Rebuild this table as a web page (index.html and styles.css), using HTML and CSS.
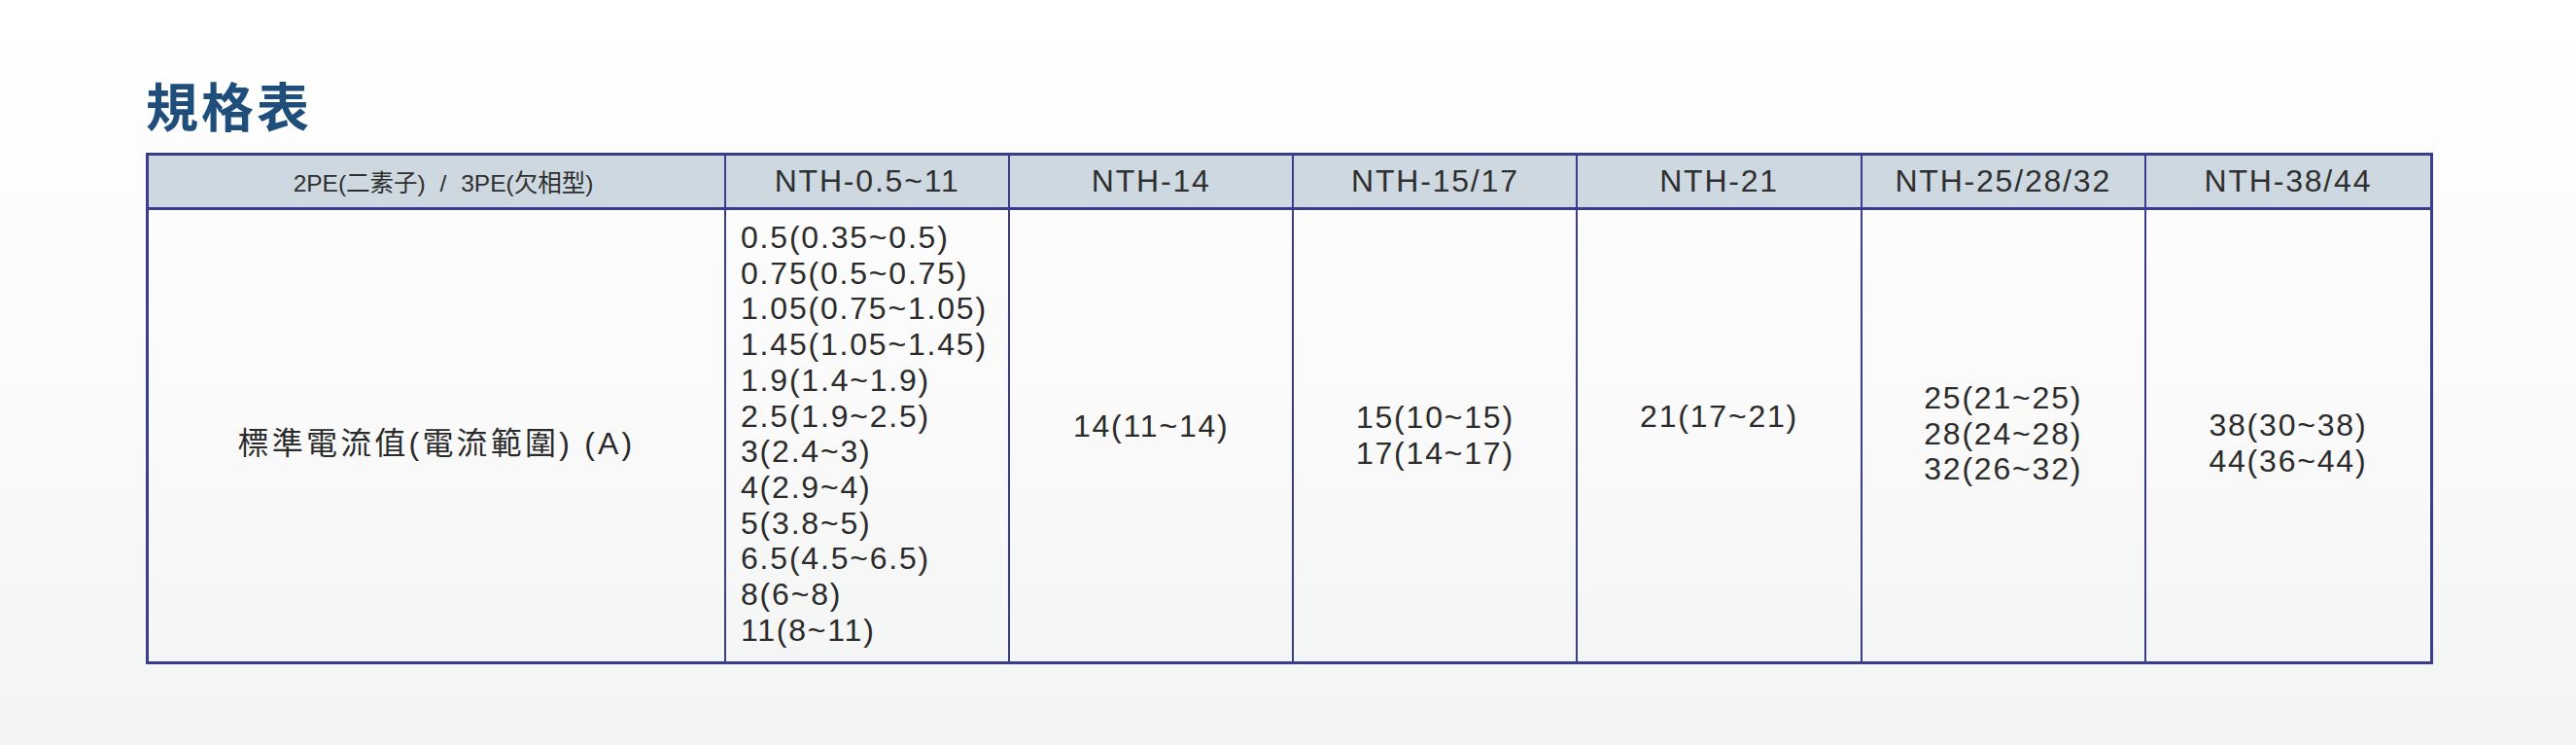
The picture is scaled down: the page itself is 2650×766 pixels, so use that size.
FILE: index.html
```html
<!DOCTYPE html>
<html lang="zh-Hant">
<head>
<meta charset="utf-8">
<title>規格表</title>
<link rel="stylesheet" href="styles.css">
</head>
<body>
<main class="page">
  <h1 class="title">規格表</h1>
  <table class="spec">
    <colgroup>
      <col class="col-label">
      <col class="col-model">
      <col class="col-model">
      <col class="col-model">
      <col class="col-model">
      <col class="col-model">
      <col class="col-model">
    </colgroup>
    <thead>
      <tr>
        <th class="head-label">2PE(二素子) / 3PE(欠相型)</th>
        <th>NTH-0.5~11</th>
        <th>NTH-14</th>
        <th>NTH-15/17</th>
        <th>NTH-21</th>
        <th>NTH-25/28/32</th>
        <th>NTH-38/44</th>
      </tr>
    </thead>
    <tbody>
      <tr>
        <td class="row-label shift-down">標準電流值(電流範圍) (A)</td>
        <td class="list">0.5(0.35~0.5)<br>0.75(0.5~0.75)<br>1.05(0.75~1.05)<br>1.45(1.05~1.45)<br>1.9(1.4~1.9)<br>2.5(1.9~2.5)<br>3(2.4~3)<br>4(2.9~4)<br>5(3.8~5)<br>6.5(4.5~6.5)<br>8(6~8)<br>11(8~11)</td>
        <td class="shift-up-s">14(11~14)</td>
        <td>15(10~15)<br>17(14~17)</td>
        <td class="shift-up-l">21(17~21)</td>
        <td class="shift-up-xs">25(21~25)<br>28(24~28)<br>32(26~32)</td>
        <td class="shift-down last">38(30~38)<br>44(36~44)</td>
      </tr>
    </tbody>
  </table>
</main>
</body>
</html>
```

FILE: styles.css
```css
html, body {
  margin: 0;
  padding: 0;
}

body {
  width: 2650px;
  height: 766px;
  background: linear-gradient(to bottom, #ffffff 0%, #fbfbfb 45%, #f3f4f4 100%);
  font-family: "Liberation Sans", Arial, "Noto Sans CJK TC", sans-serif;
  color: #2b2b2b;
  overflow: hidden;
}

.page {
  padding: 81px 0 0 150px;
}

.title {
  margin: 0 0 22px 0;
  font-family: "Noto Sans CJK TC", "Noto Sans CJK SC", sans-serif;
  font-weight: 700;
  font-size: 54px;
  line-height: 54px;
  letter-spacing: 3px;
  color: #1f4e7b;
}

.spec {
  width: 2353px;
  table-layout: fixed;
  border-collapse: separate;
  border-spacing: 0;
  border: 3px solid #3a3d8d;
}

.col-label {
  width: 594px;
}

.spec th,
.spec td {
  box-sizing: border-box;
  padding: 0;
  border-right: 2px solid #3a3d8d;
  text-align: center;
  font-weight: 400;
}

.spec th:last-child,
.spec td:last-child {
  border-right: none;
}

.spec th {
  height: 56px;
  background: #cdd8e0;
  border-bottom: 3px solid #3a3d8d;
  font-size: 32px;
  letter-spacing: 1.8px;
  color: #2f2f2f;
  vertical-align: middle;
}

.spec th.head-label {
  font-size: 24.5px;
  letter-spacing: 0;
  word-spacing: 8px;
  padding-left: 14px;
}

.spec td {
  height: 464px;
  font-size: 32px;
  line-height: 36.7px;
  letter-spacing: 1.8px;
  vertical-align: middle;
  color: #2b2b2b;
}

.spec td.row-label {
  letter-spacing: 3.2px;
  padding-left: 0;
}

.spec td.list {
  vertical-align: top;
  text-align: left;
  padding: 10px 0 0 15px;
}

.shift-down {
  padding-top: 16px !important;
}

.shift-up-xs {
  padding-bottom: 4px !important;
}

.shift-up-s {
  padding-bottom: 19px !important;
}

.shift-up-l {
  padding-bottom: 40px !important;
}
```
